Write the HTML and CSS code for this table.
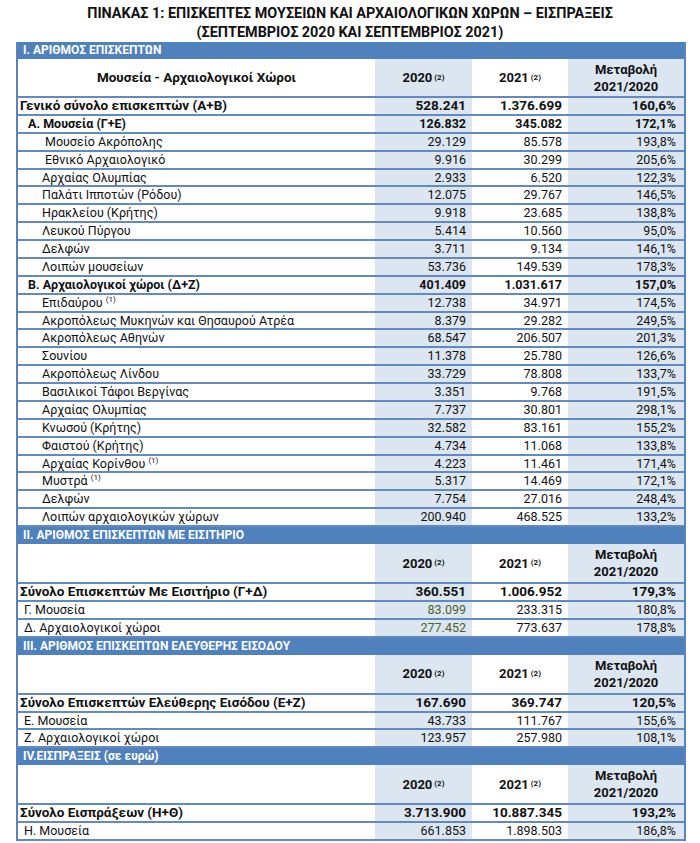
FILE: index.html
```html
<!DOCTYPE html>
<html lang="el">
<head>
<meta charset="utf-8">
<link rel="stylesheet" href="styles.css">
<title>Πίνακας 1</title>
</head>
<body>
<div class="page">
  <h1 class="title">ΠΙΝΑΚΑΣ 1: ΕΠΙΣΚΕΠΤΕΣ ΜΟΥΣΕΙΩΝ ΚΑΙ ΑΡΧΑΙΟΛΟΓΙΚΩΝ ΧΩΡΩΝ – ΕΙΣΠΡΑΞΕΙΣ<br>(ΣΕΠΤΕΜΒΡΙΟΣ 2020 ΚΑΙ ΣΕΠΤΕΜΒΡΙΟΣ 2021)</h1>
  <div class="table">
    <div class="section">I. ΑΡΙΘΜΟΣ ΕΠΙΣΚΕΠΤΩΝ</div>
    <div class="row head">
      <div class="c1 hname">Μουσεία - Αρχαιολογικοί Χώροι</div>
      <div class="c2">2020 <sup>(2)</sup></div>
      <div class="c3">2021 <sup>(2)</sup></div>
      <div class="c4">Μεταβολή<br>2021/2020</div>
    </div>
    <div class="row total"><div class="c1">Γενικό σύνολο επισκεπτών (Α+Β)</div><div class="c2">528.241</div><div class="c3">1.376.699</div><div class="c4">160,6%</div></div>
    <div class="row group"><div class="c1">Α. Μουσεία (Γ+Ε)</div><div class="c2">126.832</div><div class="c3">345.082</div><div class="c4">172,1%</div></div>
    <div class="row item deep"><div class="c1">Μουσείο Ακρόπολης</div><div class="c2">29.129</div><div class="c3">85.578</div><div class="c4">193,8%</div></div>
    <div class="row item deep"><div class="c1">Εθνικό Αρχαιολογικό</div><div class="c2">9.916</div><div class="c3">30.299</div><div class="c4">205,6%</div></div>
    <div class="row item"><div class="c1">Αρχαίας Ολυμπίας</div><div class="c2">2.933</div><div class="c3">6.520</div><div class="c4">122,3%</div></div>
    <div class="row item"><div class="c1">Παλάτι Ιπποτών (Ρόδου)</div><div class="c2">12.075</div><div class="c3">29.767</div><div class="c4">146,5%</div></div>
    <div class="row item"><div class="c1">Ηρακλείου (Κρήτης)</div><div class="c2">9.918</div><div class="c3">23.685</div><div class="c4">138,8%</div></div>
    <div class="row item"><div class="c1">Λευκού Πύργου</div><div class="c2">5.414</div><div class="c3">10.560</div><div class="c4">95,0%</div></div>
    <div class="row item"><div class="c1">Δελφών</div><div class="c2">3.711</div><div class="c3">9.134</div><div class="c4">146,1%</div></div>
    <div class="row item"><div class="c1">Λοιπών μουσείων</div><div class="c2">53.736</div><div class="c3">149.539</div><div class="c4">178,3%</div></div>
    <div class="row group"><div class="c1">Β. Αρχαιολογικοί χώροι (Δ+Ζ)</div><div class="c2">401.409</div><div class="c3">1.031.617</div><div class="c4">157,0%</div></div>
    <div class="row item"><div class="c1">Επιδαύρου <sup>(1)</sup></div><div class="c2">12.738</div><div class="c3">34.971</div><div class="c4">174,5%</div></div>
    <div class="row item"><div class="c1">Ακροπόλεως Μυκηνών και Θησαυρού Ατρέα</div><div class="c2">8.379</div><div class="c3">29.282</div><div class="c4">249,5%</div></div>
    <div class="row item"><div class="c1">Ακροπόλεως Αθηνών</div><div class="c2">68.547</div><div class="c3">206.507</div><div class="c4">201,3%</div></div>
    <div class="row item"><div class="c1">Σουνίου</div><div class="c2">11.378</div><div class="c3">25.780</div><div class="c4">126,6%</div></div>
    <div class="row item"><div class="c1">Ακροπόλεως Λίνδου</div><div class="c2">33.729</div><div class="c3">78.808</div><div class="c4">133,7%</div></div>
    <div class="row item"><div class="c1">Βασιλικοί Τάφοι Βεργίνας</div><div class="c2">3.351</div><div class="c3">9.768</div><div class="c4">191,5%</div></div>
    <div class="row item"><div class="c1">Αρχαίας Ολυμπίας</div><div class="c2">7.737</div><div class="c3">30.801</div><div class="c4">298,1%</div></div>
    <div class="row item"><div class="c1">Κνωσού (Κρήτης)</div><div class="c2">32.582</div><div class="c3">83.161</div><div class="c4">155,2%</div></div>
    <div class="row item"><div class="c1">Φαιστού (Κρήτης)</div><div class="c2">4.734</div><div class="c3">11.068</div><div class="c4">133,8%</div></div>
    <div class="row item"><div class="c1">Αρχαίας Κορίνθου <sup>(1)</sup></div><div class="c2">4.223</div><div class="c3">11.461</div><div class="c4">171,4%</div></div>
    <div class="row item"><div class="c1">Μυστρά <sup>(1)</sup></div><div class="c2">5.317</div><div class="c3">14.469</div><div class="c4">172,1%</div></div>
    <div class="row item"><div class="c1">Δελφών</div><div class="c2">7.754</div><div class="c3">27.016</div><div class="c4">248,4%</div></div>
    <div class="row item"><div class="c1">Λοιπών αρχαιολογικών χώρων</div><div class="c2">200.940</div><div class="c3">468.525</div><div class="c4">133,2%</div></div>

    <div class="section">II. ΑΡΙΘΜΟΣ ΕΠΙΣΚΕΠΤΩΝ ΜΕ ΕΙΣΙΤΗΡΙΟ</div>
    <div class="row head alt">
      <div class="c1"></div>
      <div class="c2">2020 <sup>(2)</sup></div>
      <div class="c3">2021 <sup>(2)</sup></div>
      <div class="c4">Μεταβολή<br>2021/2020</div>
    </div>
    <div class="row total"><div class="c1">Σύνολο Επισκεπτών Με Εισιτήριο (Γ+Δ)</div><div class="c2">360.551</div><div class="c3">1.006.952</div><div class="c4">179,3%</div></div>
    <div class="row sub"><div class="c1">Γ. Μουσεία</div><div class="c2 green">83.099</div><div class="c3">233.315</div><div class="c4">180,8%</div></div>
    <div class="row sub"><div class="c1">Δ. Αρχαιολογικοί χώροι</div><div class="c2 green">277.452</div><div class="c3">773.637</div><div class="c4">178,8%</div></div>

    <div class="section">III. ΑΡΙΘΜΟΣ ΕΠΙΣΚΕΠΤΩΝ ΕΛΕΥΘΕΡΗΣ ΕΙΣΟΔΟΥ</div>
    <div class="row head alt">
      <div class="c1"></div>
      <div class="c2">2020 <sup>(2)</sup></div>
      <div class="c3">2021 <sup>(2)</sup></div>
      <div class="c4">Μεταβολή<br>2021/2020</div>
    </div>
    <div class="row total"><div class="c1">Σύνολο Επισκεπτών Ελεύθερης Εισόδου (Ε+Ζ)</div><div class="c2">167.690</div><div class="c3">369.747</div><div class="c4">120,5%</div></div>
    <div class="row sub"><div class="c1">Ε. Μουσεία</div><div class="c2">43.733</div><div class="c3">111.767</div><div class="c4">155,6%</div></div>
    <div class="row sub"><div class="c1">Ζ. Αρχαιολογικοί χώροι</div><div class="c2">123.957</div><div class="c3">257.980</div><div class="c4">108,1%</div></div>

    <div class="section">IV.ΕΙΣΠΡΑΞΕΙΣ (σε ευρώ)</div>
    <div class="row head alt">
      <div class="c1"></div>
      <div class="c2">2020 <sup>(2)</sup></div>
      <div class="c3">2021 <sup>(2)</sup></div>
      <div class="c4">Μεταβολή<br>2021/2020</div>
    </div>
    <div class="row total"><div class="c1">Σύνολο Εισπράξεων (Η+Θ)</div><div class="c2">3.713.900</div><div class="c3">10.887.345</div><div class="c4">193,2%</div></div>
    <div class="row sub"><div class="c1">Η. Μουσεία</div><div class="c2">661.853</div><div class="c3">1.898.503</div><div class="c4">186,8%</div></div>
  </div>
</div>
</body>
</html>
```
FILE: styles.css
```css
html, body {
  margin: 0;
  padding: 0;
  background: #ffffff;
}
body {
  font-family: Roboto, "Noto Sans", sans-serif;
  color: #111;
  overflow: hidden;
}
.page {
  padding-top: 4px;
}
.title {
  margin: 0;
  font-size: 14.4px;
  line-height: 19px;
  font-weight: 700;
  text-align: center;
  color: #111;
}
.table {
  margin: 0 0 0 16px;
  width: 670px;
  box-sizing: border-box;
  border-left: 2px solid #5b82ba;
  border-right: 2px solid #5b82ba;
}
.section {
  height: 17px;
  line-height: 17px;
  background: #4f81bd;
  color: #fff;
  font-weight: 700;
  font-size: 12px;
  padding-left: 5px;
}
.row {
  display: grid;
  grid-template-columns: 357px 97px 96px 116px;
  height: 17.875px;
  box-sizing: border-box;
  border-bottom: 2px solid #6289c0;
  font-size: 12.5px;
  line-height: 15.875px;
}
.row > div {
  white-space: nowrap;
  overflow: hidden;
}
.c2, .c4 {
  background: #dce6f1;
}
.c2, .c3 {
  text-align: right;
  padding-right: 6px;
}
.c4 {
  text-align: right;
  padding-right: 8px;
}
.row .c1 {
  padding-left: 22px;
}
.row.head {
  height: 39px;
  line-height: 17px;
  font-weight: 700;
  font-size: 13px;
}
.row.head.alt {
  height: 40px;
}
.row.head > div {
  display: flex;
  align-items: center;
  justify-content: center;
  text-align: center;
  padding: 0;
}
.row.head .c4 {
  flex-direction: column;
}
.row.head .hname {
  font-size: 13.5px;
}
.row.total {
  font-weight: 700;
  font-size: 13.5px;
}
.row.total .c1 {
  padding-left: 2px;
}
.row.group {
  font-weight: 700;
}
.row.group .c1 {
  padding-left: 10px;
}
.row.item .c1 {
  padding-left: 24px;
}
.row.item.deep .c1 {
  padding-left: 27px;
}
.row.sub .c1 {
  padding-left: 6px;
}
sup {
  font-size: 8px;
  line-height: 0;
  vertical-align: 5px;
  font-weight: 400;
}
.row.head sup {
  font-weight: 700;
  margin-left: 2px;
}
.green {
  color: #4f6228;
}
```
